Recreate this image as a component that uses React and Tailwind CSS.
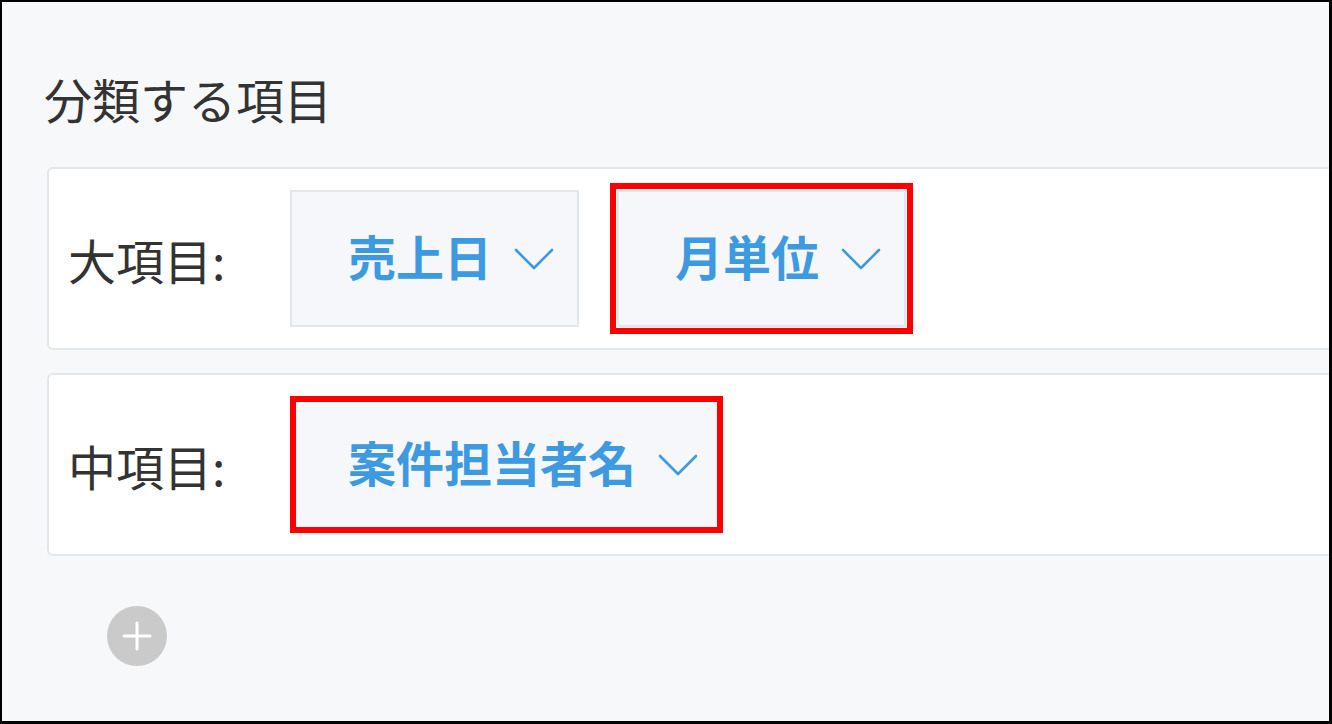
import React from 'react';

const font = { fontFamily: '"Noto Sans CJK JP", "Noto Sans", sans-serif' };

function Chevron() {
  return (
    <svg width="40" height="22" viewBox="0 0 40 22" fill="none" className="shrink-0">
      <path d="M2 2 L20 20 L38 2" stroke="#3d9ae0" strokeWidth="2.6" strokeLinecap="round" strokeLinejoin="round" />
    </svg>
  );
}

function SelectButton({ label, marked, inset }) {
  // red annotation boxes are drawn as outlines so they don't move the layout
  let outline = '';
  if (marked && inset) outline = 'outline-[6px] outline-[#ff0000] outline-offset-[-6px]';
  else if (marked) outline = 'outline-[6px] outline-[#ff0000] outline-offset-[1px]';
  return (
    <div
      className={`flex items-center h-[137px] pl-[56px] pr-[23px] gap-[22px] bg-[#f5f7fa] border-2 border-[#e3e7ea] ${outline}`}
    >
      <span className="mb-[8px] text-[48px] leading-[48px] font-bold text-[#3d9ae0]">{label}</span>
      <Chevron />
    </div>
  );
}

function Row({ title, children }) {
  return (
    <div className="flex items-center h-[183px] ml-[45px] -mr-[40px] bg-white border-2 border-[#e4e7ea] rounded-l-[6px]">
      <div className="w-[241px] pl-[19px] text-[48px] leading-[48px] text-[#333333] shrink-0">{title}</div>
      <div className="flex items-center gap-[38px]">{children}</div>
    </div>
  );
}

export default function App() {
  return (
    <div
      style={font}
      className="w-[1332px] h-[724px] overflow-hidden bg-[#f7f8fa] border-t-2 border-l-2 border-r-[3px] border-b-[3px] border-black"
    >
      <div className="mt-[72px] mb-[45px] pl-[42px] text-[48px] leading-[48px] text-[#333333]">分類する項目</div>

      <div className="flex flex-col gap-[23px]">
        <Row title="大項目:">
          <SelectButton label="売上日" />
          <SelectButton label="月単位" marked />
        </Row>
        <Row title="中項目:">
          <SelectButton label="案件担当者名" marked inset />
        </Row>
      </div>

      <div className="mt-[50px] ml-[105px] w-[60px] h-[60px] rounded-full bg-[#cacaca] flex items-center justify-center">
        <svg width="30" height="30" viewBox="0 0 30 30">
          <path d="M15 2 V28 M2 15 H28" stroke="#ffffff" strokeWidth="3" strokeLinecap="round" />
        </svg>
      </div>
    </div>
  );
}
